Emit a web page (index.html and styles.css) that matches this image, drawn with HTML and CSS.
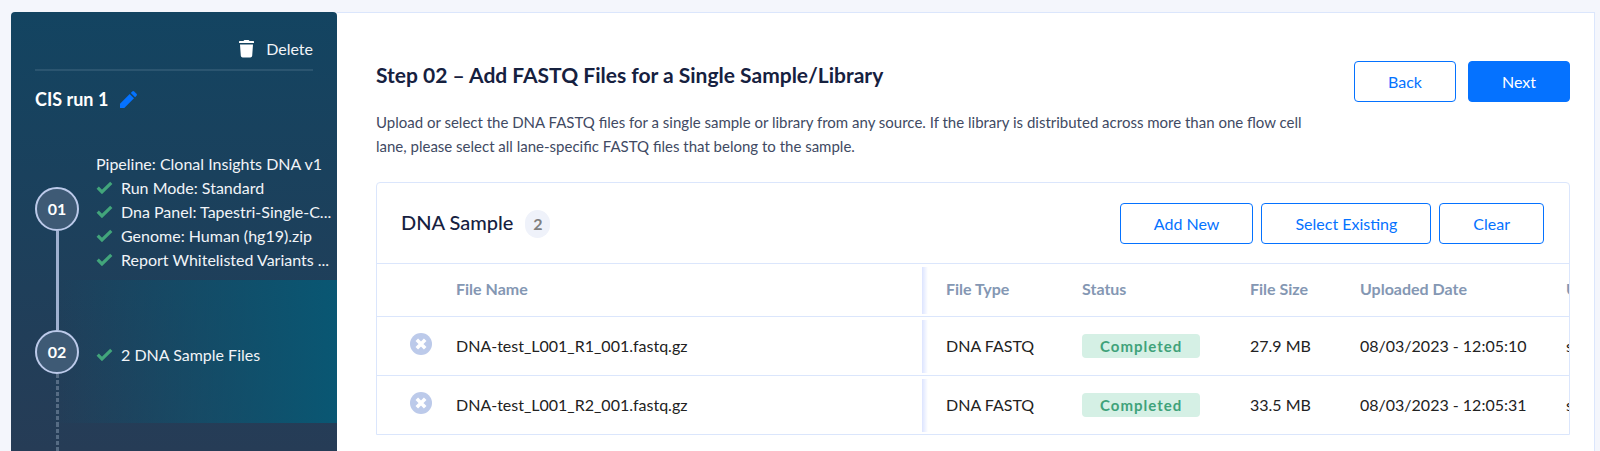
FILE: index.html
```html
<!DOCTYPE html>
<html lang="en">
<head>
<meta charset="utf-8">
<meta name="viewport" content="width=device-width, initial-scale=1">
<title>CIS run 1</title>
<link rel="stylesheet" href="styles.css">
</head>
<body>
<svg class="sprite" aria-hidden="true">
  <symbol id="check" viewBox="0 0 16 12"><path d="M1.6 6.2 5.6 10.2 14.4 1.6" fill="none" stroke="currentColor" stroke-width="3"/></symbol>
  <symbol id="remove" viewBox="0 0 22 22"><circle cx="11" cy="11" r="11" fill="#bccaea"/><path d="M6.8 6.8 15.2 15.2M15.2 6.8 6.8 15.2" fill="none" stroke="#fff" stroke-width="3.6"/></symbol>
</svg>
<div class="app">
  <aside class="sidebar">
    <div class="toolbar">
      <button class="delete" type="button">
        <svg width="15" height="18" viewBox="0 0 15 18" aria-hidden="true"><path fill="#fff" d="M0 1.6Q0 1 .7 1H4.4L5.4 0H9.6L10.6 1H14.3Q15 1 15 1.6V3H0ZM1 4.4H14L13.2 15.8Q13 17.6 11.3 17.6H3.7Q2 17.6 1.8 15.8Z"/></svg>
        Delete
      </button>
    </div>
    <div class="run">
      <h2 class="run-name">CIS run 1</h2>
      <button class="edit" type="button" aria-label="Edit run name">
        <svg width="17" height="17" viewBox="0 0 17 17" aria-hidden="true"><path fill="#0572ff" d="M0 17V12.7L9.7 3 14 7.3 4.3 17ZM10.8 1.9 12.2.5Q13.2-.4 14.2.5L16.5 2.8Q17.4 3.8 16.5 4.8L15.1 6.2Z"/></svg>
      </button>
    </div>
    <ol class="steps">
      <li class="step">
        <div class="rail"><span class="line line-none"></span><span class="badge">01</span><span class="line"></span></div>
        <ul class="facts">
          <li class="fact"><span class="fact-text">Pipeline: Clonal Insights DNA v1</span></li>
          <li class="fact"><svg class="check"><use href="#check"/></svg><span class="fact-text">Run Mode: Standard</span></li>
          <li class="fact"><svg class="check"><use href="#check"/></svg><span class="fact-text">Dna Panel: Tapestri-Single-C...</span></li>
          <li class="fact"><svg class="check"><use href="#check"/></svg><span class="fact-text">Genome: Human (hg19).zip</span></li>
          <li class="fact"><svg class="check"><use href="#check"/></svg><span class="fact-text">Report Whitelisted Variants ...</span></li>
        </ul>
      </li>
      <li class="step step-active">
        <div class="rail"><span class="line"></span><span class="badge">02</span><span class="line line-dashed"></span></div>
        <ul class="facts">
          <li class="fact"><svg class="check"><use href="#check"/></svg><span class="fact-text">2 DNA Sample Files</span></li>
        </ul>
      </li>
      <li class="step step-rest">
        <div class="rail"><span class="line line-dashed"></span></div>
      </li>
    </ol>
  </aside>

  <main class="main">
    <header class="head">
      <div class="intro">
        <h1 class="title">Step 02 – Add FASTQ Files for a Single Sample/Library</h1>
        <p class="lead">Upload or select the DNA FASTQ files for a single sample or library from any source. If the library is distributed across more than one flow cell lane, please select all lane-specific FASTQ files that belong to the sample.</p>
      </div>
      <div class="nav">
        <button class="btn" type="button">Back</button>
        <button class="btn btn-primary" type="button">Next</button>
      </div>
    </header>

    <section class="panel">
      <div class="panel-head">
        <h2 class="panel-title">DNA Sample</h2>
        <span class="count">2</span>
        <div class="actions">
          <button class="btn" type="button">Add New</button>
          <button class="btn" type="button">Select Existing</button>
          <button class="btn" type="button">Clear</button>
        </div>
      </div>
      <div class="scroller">
        <table class="files">
          <colgroup><col class="c-icon"><col class="c-name"><col class="c-type"><col class="c-status"><col class="c-size"><col class="c-date"><col class="c-user"></colgroup>
          <thead>
            <tr><th></th><th class="pinned">File Name</th><th>File Type</th><th>Status</th><th>File Size</th><th>Uploaded Date</th><th>U</th></tr>
          </thead>
          <tbody>
            <tr>
              <td class="icon-cell"><button class="remove" type="button" aria-label="Remove file"><svg width="22" height="22"><use href="#remove"/></svg></button></td>
              <td class="pinned">DNA-test_L001_R1_001.fastq.gz</td><td>DNA FASTQ</td><td><span class="status">Completed</span></td><td>27.9 MB</td><td>08/03/2023 - 12:05:10</td><td>s</td>
            </tr>
            <tr>
              <td class="icon-cell"><button class="remove" type="button" aria-label="Remove file"><svg width="22" height="22"><use href="#remove"/></svg></button></td>
              <td class="pinned">DNA-test_L001_R2_001.fastq.gz</td><td>DNA FASTQ</td><td><span class="status">Completed</span></td><td>33.5 MB</td><td>08/03/2023 - 12:05:31</td><td>s</td>
            </tr>
          </tbody>
        </table>
      </div>
    </section>
  </main>
</div>
</body>
</html>
```
FILE: styles.css
```css
* { box-sizing: border-box; }
body {
  margin: 0;
  background: #f4f6fc;
  color: #222;
  font: 16px/24px Lato, "Liberation Sans", sans-serif;
}
h1, h2, p, ol, ul { margin: 0; padding: 0; }
ol, ul { list-style: none; }
button { margin: 0; font: inherit; cursor: pointer; }
svg { display: block; }
.sprite { display: none; }

.app {
  display: flex;
  min-height: 100vh;
  padding: 12px 5px 0 11px;
}

/* Sidebar */
.sidebar {
  display: flex;
  flex-direction: column;
  flex: none;
  width: 326px;
  border-radius: 4px 4px 0 0;
  background: linear-gradient(#134461, #263c56);
  color: #f1f4f8;
}
.toolbar {
  display: flex;
  justify-content: flex-end;
  margin: 0 24px;
  padding: 25px 0 8px;
  border-bottom: 2px solid #2b5570;
}
.delete {
  display: flex;
  align-items: center;
  gap: 12px;
  padding: 0;
  border: 0;
  background: none;
  color: #f1f4f8;
}
.run {
  display: flex;
  align-items: center;
  gap: 12px;
  padding: 16px 24px 26px;
}
.run-name { font-size: 18px; line-height: 24px; font-weight: 700; color: #fff; }
.edit { padding: 0; border: 0; background: none; }
.steps { display: flex; flex-direction: column; flex: 1; }
.step {
  display: flex;
  gap: 17px;
  min-height: 143px;
  padding-left: 24px;
}
.step-active { background: linear-gradient(90deg, rgba(9, 87, 115, 0) 12%, #095773); }
.step-rest { flex: 1; min-height: 0; }
.rail {
  display: flex;
  flex-direction: column;
  align-items: center;
  flex: none;
  width: 44px;
}
.line { flex: 1; width: 3px; background: #9fb1d0; }
.line-none { background: none; }
.line-dashed { background: repeating-linear-gradient(#566c84 0 4px, transparent 4px 6px); }
.badge {
  display: flex;
  align-items: center;
  justify-content: center;
  width: 44px;
  height: 44px;
  border: 2px solid #bccaea;
  border-radius: 50%;
  background: #3e5a75;
  color: #fff;
  font-weight: 700;
}
.facts { align-self: center; min-width: 0; padding-top: 6px; }
.fact { display: flex; align-items: center; gap: 8px; }
.fact-text { white-space: nowrap; }
.check { flex: none; width: 17px; height: 13px; color: #42a57b; }

/* Main card */
.main {
  flex: 1;
  min-width: 0;
  padding: 48px 24px 15px 39px;
  border: 1px solid #dbe6fc;
  border-left: 0;
  border-bottom: 0;
  background: #fff;
}
.head { display: flex; justify-content: space-between; gap: 40px; }
.intro { max-width: 940px; }
.title { padding-top: 2px; font-size: 21px; line-height: 24px; font-weight: 700; color: #16213f; }
.lead { padding-top: 23px; font-size: 15px; line-height: 24px; color: #414a63; }
.nav { display: flex; align-items: flex-start; gap: 12px; }
.btn {
  height: 41px;
  padding: 0 33px;
  border: 1px solid #0572ff;
  border-radius: 4px;
  background: #fff;
  color: #0572ff;
  white-space: nowrap;
}
.btn-primary { background: #0572ff; color: #fff; }

.panel {
  margin-top: 24px;
  border: 1px solid #dbe6fc;
  border-radius: 4px 4px 0 0;
}
.panel-head { display: flex; align-items: center; padding: 20px 25px 19px 24px; }
.panel-title { padding-bottom: 4px; font-size: 20px; line-height: 24px; font-weight: 500; color: #16213f; }
.count {
  width: 25px;
  margin-left: 12px;
  padding: 2px 0;
  border-radius: 14px;
  background: #eff2fa;
  color: #808080;
  font-weight: 700;
  text-align: center;
}
.actions { display: flex; gap: 8px; margin-left: auto; }

/* File table */
.scroller { overflow-x: auto; scrollbar-width: none; }
.files {
  width: 100%;
  min-width: 1339px;
  border-collapse: separate;
  border-spacing: 0;
  table-layout: fixed;
}
.c-icon { width: 79px; }
.c-name { width: 490px; }
.c-type { width: 136px; }
.c-status { width: 168px; }
.c-size { width: 110px; }
.c-date { width: 206px; }
.c-user { width: 150px; }
.files th, .files td {
  padding: 0;
  border-top: 1px solid #dbe6fc;
  text-align: left;
  white-space: nowrap;
}
.files th { height: 53px; padding-bottom: 2px; color: #8497b3; font-weight: 700; }
.files td { height: 59px; }
.pinned { position: relative; }
.pinned::after {
  content: "";
  position: absolute;
  top: 3px;
  right: 18px;
  bottom: 2px;
  width: 6px;
  background: linear-gradient(90deg, #dce4ff, #fff);
}
.remove { display: block; margin: 0 0 5px 33px; padding: 0; border: 0; background: none; }
.status {
  display: inline-block;
  padding: 0 18px;
  border-radius: 4px;
  background: #d5f0e5;
  color: #3fa27a;
  font-size: 15px;
  font-weight: 700;
  letter-spacing: 1px;
}
```
